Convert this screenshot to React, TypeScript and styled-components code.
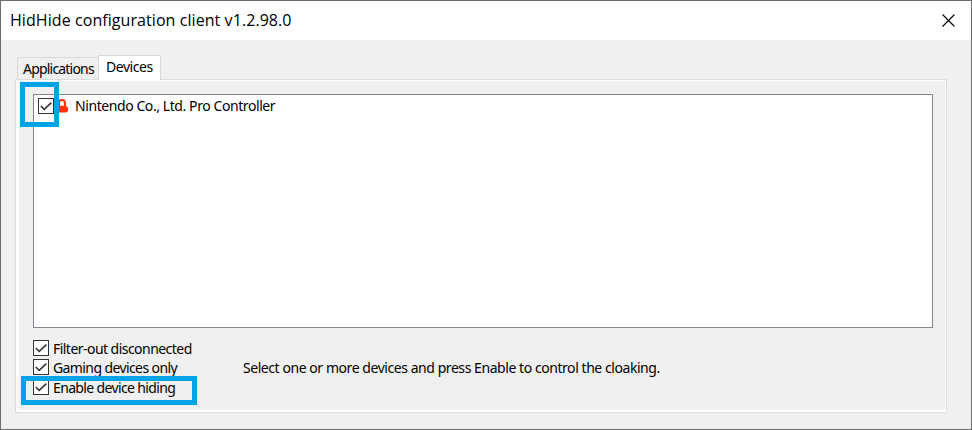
import React from "react";
import styled, { createGlobalStyle } from "styled-components";

const GlobalStyle = createGlobalStyle`
  * { box-sizing: border-box; }
  body { margin: 0; background: #f0f0f0; }
`;

const Window = styled.div`
  width: 972px;
  height: 430px;
  border: 1px solid #6d6d6d;
  background: #f0f0f0;
  color: #000;
  font-family: "Noto Sans", sans-serif;
  font-size: 14px;
  overflow: hidden;
`;

const TitleBar = styled.header`
  height: 39px;
  padding: 0 16px 0 9px;
  display: flex;
  align-items: center;
  justify-content: space-between;
  background: #fff;
`;

const Title = styled.h1`
  margin: 0;
  padding-bottom: 1px;
  font: 400 16px/24px "Open Sans", sans-serif;
  letter-spacing: 0.07px;
`;

const CloseButton = styled.button`
  display: flex;
  padding: 0;
  border: 0;
  background: none;
`;

const Label = styled.span<{ $spacing: number }>`
  white-space: nowrap;
  line-height: 18px;
  letter-spacing: ${(p) => p.$spacing}px;
`;

const TabStrip = styled.nav`
  display: flex;
  align-items: flex-end;
  height: 39px;
  margin-left: 16px;
`;

const Tab = styled.button<{ $active?: boolean }>`
  width: ${(p) => (p.$active ? 63 : 81)}px;
  height: ${(p) => (p.$active ? 25 : 22)}px;
  margin-bottom: ${(p) => (p.$active ? -1 : 0)}px;
  padding: ${(p) => (p.$active ? "2px 0 0 7px" : "2px 0 0 5px")};
  display: flex;
  align-items: flex-start;
  border: 1px solid #d9d9d9;
  border-bottom: 0;
  border-right-width: ${(p) => (p.$active ? 1 : 0)}px;
  background: ${(p) => (p.$active ? "#fff" : "#f0f0f0")};
  font: inherit;
  color: inherit;
  position: relative;
  z-index: ${(p) => (p.$active ? 1 : 0)};
`;

const Panel = styled.main`
  width: 932px;
  height: 334px;
  margin-left: 14px;
  padding: 14px 11px 0 14px;
  border: 1px solid #dcdcdc;
  box-shadow: inset 3px 1px #fff, inset -1px -2px #fff;
`;

const DeviceList = styled.ul`
  width: 900px;
  height: 234px;
  margin: 0 0 0 3px;
  padding: 3px 4px;
  list-style: none;
  border: 1px solid #828790;
  background: #fff;
`;

const DeviceRow = styled.li`
  display: flex;
  align-items: flex-start;
  height: 18px;

  ${Label} {
    line-height: 16px;
  }
`;

const LockSlot = styled.span`
  display: flex;
  width: 21px;
  padding: 1px 0 0 3px;
`;

const Footer = styled.footer`
  display: flex;
  align-items: flex-start;
  padding: 12px 0 0 3px;
`;

const Options = styled.div`
  display: grid;
  grid-template-rows: 19px 20px 18px;
  width: 210px;
`;

const Option = styled.div`
  display: flex;
  align-items: flex-start;
  gap: 4px;
`;

const Hint = styled.div`
  display: flex;
  padding-top: 19px;
`;

const Box = styled.span`
  display: flex;
  flex: none;
  width: 16px;
  height: 16px;
  border: 1px solid #333;
  background: #fff;
`;

const Highlight = styled.div<{ $x: number; $y: number; $w: number; $h: number }>`
  position: absolute;
  left: ${(p) => p.$x}px;
  top: ${(p) => p.$y}px;
  width: ${(p) => p.$w}px;
  height: ${(p) => p.$h}px;
  border: 5px solid #00a2e8;
  pointer-events: none;
  z-index: 2;
`;

const Checkbox = () => (
  <Box role="checkbox" aria-checked="true">
    <svg width="14" height="14" viewBox="0 0 14 14" fill="none">
      <path d="M1.8 7 5.2 10.4 12.4 3.6" stroke="#333" strokeWidth="1.5" />
    </svg>
  </Box>
);

const options = [
  { text: "Filter-out disconnected", spacing: -0.54 },
  { text: "Gaming devices only", spacing: -0.6 },
  { text: "Enable device hiding", spacing: -0.64 },
];

export default function App() {
  return (
    <>
      <GlobalStyle />
      <Window>
        <TitleBar>
          <Title>HidHide configuration client v1.2.98.0</Title>
          <CloseButton aria-label="Close">
            <svg width="13" height="13" viewBox="0 0 13 13">
              <path d="M.5.5l12 12M12.5.5l-12 12" stroke="#000" strokeWidth="1.1" />
            </svg>
          </CloseButton>
        </TitleBar>
        <TabStrip>
          <Tab><Label $spacing={-0.8}>Applications</Label></Tab>
          <Tab $active><Label $spacing={-0.45}>Devices</Label></Tab>
        </TabStrip>
        <Panel>
          <DeviceList>
            <DeviceRow>
              <Checkbox />
              <LockSlot>
                <svg width="11" height="14" viewBox="0 0 11 14">
                  <path d="M2 7V3.5Q2 1 4.8 1T8 3.5V7" fill="none" stroke="#ff3300" strokeWidth="2" />
                  <path d="M0 6.8h9l2 2v3.2L9.5 13.6H0z" fill="#ff3300" />
                </svg>
              </LockSlot>
              <Label $spacing={-0.42}>Nintendo Co., Ltd. Pro Controller</Label>
            </DeviceRow>
          </DeviceList>
          <Footer>
            <Options>
              {options.map((o) => (
                <Option key={o.text}>
                  <Checkbox />
                  <Label $spacing={o.spacing}>{o.text}</Label>
                </Option>
              ))}
            </Options>
            <Hint>
              <Label $spacing={-0.44}>Select one or more devices and press Enable to control the cloaking.</Label>
            </Hint>
          </Footer>
        </Panel>
      </Window>
      <Highlight $x={20} $y={82} $w={39} $h={45} />
      <Highlight $x={21} $y={376} $w={176} $h={29} />
    </>
  );
}
